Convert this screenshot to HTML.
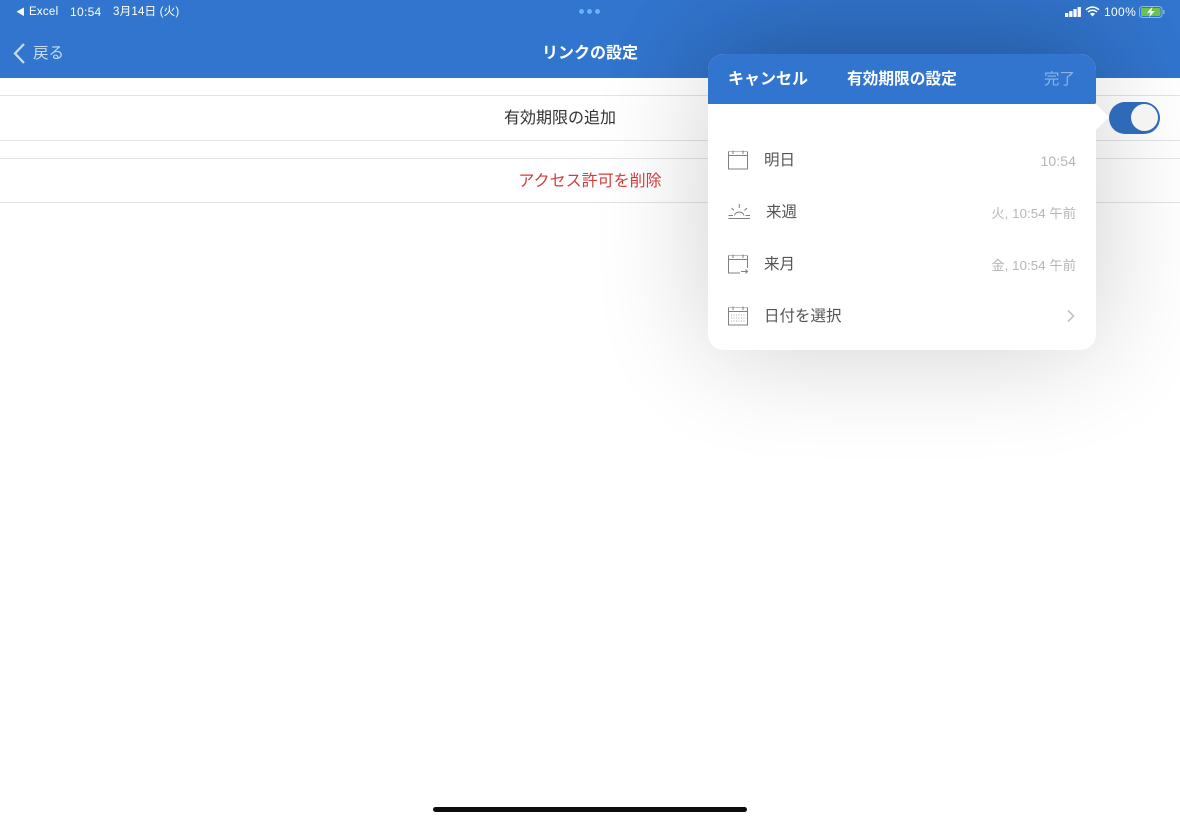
<!DOCTYPE html>
<html lang="ja">
<head>
<meta charset="utf-8">
<style>
html,body{margin:0;padding:0;background:#fff}
#p{position:relative;width:1180px;height:820px;overflow:hidden;background:#fff;font-family:"Liberation Sans","Noto Sans CJK JP",sans-serif;color:#333}
#p div,#p span{position:absolute;white-space:nowrap}
.t{line-height:20px}
.line{left:0;width:1180px;height:1px;background:#e3e3e3}
.lab{font-size:15.5px;color:#555;line-height:20px}
.val{right:104px;font-size:13.2px;color:#b5b5b5;line-height:18px;letter-spacing:.1px}
svg{position:absolute;display:block}
</style>
</head>
<body>
<div id="p">
  <div style="left:0;top:0;width:1180px;height:78px;background:#3275ce"></div>

  <div class="t" style="left:16px;top:2px;font-size:9px;color:#fff;line-height:20px">◀</div>
  <div class="t" style="left:29px;top:2px;font-size:11.5px;color:#fff;letter-spacing:.25px">Excel</div>
  <div class="t" style="left:70px;top:2px;font-size:12px;color:#fff;letter-spacing:.3px">10:54</div>
  <div class="t" style="left:113px;top:2px;font-size:11.6px;color:#fff;letter-spacing:.15px">3月14日 (火)</div>

  <div class="line" style="top:95px"></div>
  <div class="line" style="top:140px"></div>
  <div class="line" style="top:158px"></div>
  <div class="line" style="top:202px"></div>

  <svg style="left:0;top:0" width="1180" height="820" viewBox="0 0 1180 820">
    <defs>
      <filter id="b" x="-60%" y="-80%" width="220%" height="260%"><feGaussianBlur stdDeviation="58"/></filter>
      <clipPath id="h"><rect x="0" y="0" width="1180" height="78"/></clipPath>
    </defs>
    <rect x="708" y="54" width="388" height="296" rx="16" fill="#000" opacity=".19" filter="url(#b)"/>
    <g clip-path="url(#h)"><rect x="708" y="54" width="388" height="296" rx="16" fill="#000" opacity=".14" filter="url(#b)"/></g>
  </svg>

  <div style="left:579px;top:9px;width:5px;height:5px;border-radius:50%;background:#66b5f5"></div>
  <div style="left:587px;top:9px;width:5px;height:5px;border-radius:50%;background:#66b5f5"></div>
  <div style="left:595px;top:9px;width:5px;height:5px;border-radius:50%;background:#66b5f5"></div>

  <svg style="left:1064px;top:7px" width="18" height="10" viewBox="0 0 18 10"><g fill="#fff"><rect x="1" y="6" width="3.300" height="4" rx=".6"/><rect x="5.200" y="4" width="3.300" height="6" rx=".6"/><rect x="9.400" y="2" width="3.300" height="8" rx=".6"/><rect x="13.600" y="0" width="3.300" height="10" rx=".6"/></g></svg>
  <svg style="left:1085px;top:6px" width="15" height="11" viewBox="0 0 15 11"><path d="M1 3.800C4.800 .2 10.200 .2 14 3.800M3 6C5.600 3.600 9.400 3.600 12 6" fill="none" stroke="#fff" stroke-width="1.500"/><path d="M5 7.800C6.500 6.600 8.500 6.600 10 7.800L7.500 10.500Z" fill="#fff"/></svg>
  <div class="t" style="left:1104px;top:2px;font-size:12px;color:#fff;letter-spacing:.35px">100%</div>
  <svg style="left:1139px;top:6px" width="27" height="12" viewBox="0 0 27 12"><rect x=".5" y=".5" width="22.500" height="11" rx="3" fill="none" stroke="#8fb6e2"/><rect x="2" y="2" width="19.500" height="8" rx="1.500" fill="#6cc24f"/><rect x="24" y="4" width="1.500" height="4" rx=".7" fill="#8fb6e2"/><path d="M13.500 .8L8 6.800H11.500L10 11.200L15.800 5H12.300Z" fill="#fff"/></svg>

  <svg style="left:12px;top:42px" width="14" height="23" viewBox="0 0 14 23"><path d="M12 2L3 11.500L12 21" fill="none" stroke="#c6dcf3" stroke-width="2.300"/></svg>
  <div class="t" style="left:33px;top:44px;font-size:15.500px;color:#c6dcf3">戻る</div>
  <div class="t" style="left:490px;width:200px;top:44px;text-align:center;font-size:16px;font-weight:bold;color:#fff">リンクの設定</div>

  <div class="t" style="left:460px;width:200px;top:109px;text-align:center;font-size:16px;color:#333">有効期限の追加</div>
  <div class="t" style="left:490px;width:200px;top:172px;text-align:center;font-size:16px;color:#d13c3c">アクセス許可を削除</div>

  <div style="left:1109px;top:102px;width:51px;height:32px;border-radius:16px;background:#2e6ab8"></div>
  <div style="left:1131px;top:104px;width:27px;height:27px;border-radius:50%;background:#f4f4f3"></div>

  <div style="left:708px;top:54px;width:388px;height:296px;border-radius:16px;background:#fff;overflow:hidden">
    <div style="left:0;top:0;width:388px;height:50px;background:#3275ce"></div>
  </div>
  <svg style="left:1095px;top:102px" width="14" height="30" viewBox="0 0 14 30"><path d="M0 1L14 15L0 29Z" fill="#fff"/></svg>

  <div class="t" style="left:728px;top:70px;font-size:16px;font-weight:bold;color:#fff">キャンセル</div>
  <div class="t" style="left:847px;top:70px;font-size:15.700px;font-weight:bold;color:#fff">有効期限の設定</div>
  <div class="t" style="left:1044px;top:70px;font-size:15.500px;color:#8fb4e4">完了</div>

  <svg style="left:728px;top:150px" width="21" height="20" viewBox="0 0 21 20"><g fill="none" stroke="#808080" stroke-width="1"><path d="M.5 1.500H19.500" stroke="#bbb"/><path d="M.5 1.500V19H19.500V1.500M.5 5.500H19.500M5 .5V4M15 .5V4"/></g></svg>
  <div class="lab" style="left:764px;top:151px">明日</div>
  <div class="val" style="top:152px;font-size:14px;">10:54</div>

  <svg style="left:728px;top:203px" width="23" height="17" viewBox="0 0 23 17"><g fill="none" stroke="#808080" stroke-width="1"><path d="M.5 15.500H22M.5 12.500H5M17.500 12.500H22M6.500 12.500A5 5 0 0 1 16 12.500"/><path d="M11.300 1V5M3.500 5L6 7.500M19 5L16.500 7.500"/></g></svg>
  <div class="lab" style="left:766px;top:203px">来週</div>
  <div class="val" style="top:205px">火, 10:54 午前</div>

  <svg style="left:728px;top:254px" width="21" height="21" viewBox="0 0 21 21"><g fill="none" stroke="#808080" stroke-width="1"><path d="M.5 1.500H19.500" stroke="#bbb"/><path d="M19.500 14V1.500M.5 1.500V19H12M.5 5.500H19.500M5 .5V4M15 .5V4"/><path d="M13 17.500H19.500M17.500 15.500L19.500 17.500L17.500 19.500"/></g></svg>
  <div class="lab" style="left:764px;top:255px">来月</div>
  <div class="val" style="top:257px">金, 10:54 午前</div>

  <svg style="left:728px;top:306px" width="21" height="20" viewBox="0 0 21 20"><g fill="none" stroke="#808080" stroke-width="1"><path d="M.5 1.500H19.500" stroke="#bbb"/><path d="M.5 1.500V19H19.500V1.500M.5 5.500H19.500M5 .5V4M15 .5V4"/><path d="M3 9H17M3 12H17M3 15H17" stroke-dasharray="1 1.500" stroke="#aaa"/></g></svg>
  <div class="lab" style="left:764px;top:307px">日付を選択</div>
  <svg style="left:1066px;top:309px" width="10" height="14" viewBox="0 0 10 14"><path d="M2 1.500L7.500 7L2 12.500" fill="none" stroke="#c4c4c4" stroke-width="1.600"/></svg>

  <div style="left:433px;top:807px;width:314px;height:5px;border-radius:3px;background:#0d0d0d"></div>
</div>
</body>
</html>
